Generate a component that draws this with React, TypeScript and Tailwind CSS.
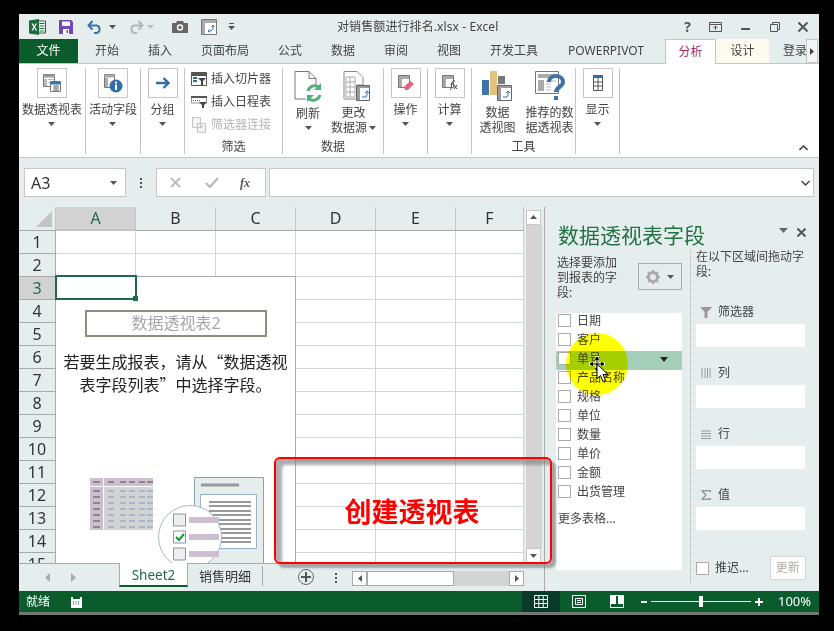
import type { ReactNode } from "react";

const cjk = "font-['Noto_Sans','Noto_Sans_CJK_SC',sans-serif]";

const tabs = [
  { label: "开始", w: "w-[58px]" },
  { label: "插入", w: "w-[48px]" },
  { label: "页面布局", w: "w-[82px]" },
  { label: "公式", w: "w-[48px]" },
  { label: "数据", w: "w-[58px]" },
  { label: "审阅", w: "w-[48px]" },
  { label: "视图", w: "w-[58px]" },
  { label: "开发工具", w: "w-[72px]" },
  { label: "POWERPIVOT", w: "w-[112px]" },
];

const fields = ["日期", "客户", "单号", "产品名称", "规格", "单位", "数量", "单价", "金额", "出货管理"];
const columns = ["A", "B", "C", "D", "E", "F"];
const rows = [1, 2, 3, 4, 5, 6, 7, 8, 9, 10, 11, 12, 13, 14, 15];

function Caret({ className = "" }: { className?: string }) {
  return (
    <svg width="7" height="4" viewBox="0 0 7 4" className={className}>
      <path d="M0 0h7L3.500 4z" fill="#555" />
    </svg>
  );
}

function IconBox({ children }: { children: ReactNode }) {
  return <div className="w-[30px] h-[30px] border border-[#c6c6c6] flex items-center justify-center">{children}</div>;
}

function BigButton({ label, children }: { label: string; children: ReactNode }) {
  return (
    <div className="flex flex-col items-center">
      <IconBox>{children}</IconBox>
      <div className="mt-[3px] leading-[18px] whitespace-nowrap">{label}</div>
      <Caret className="mt-[3px]" />
    </div>
  );
}

function Group({ w, label, children }: { w: string; label?: string; children: ReactNode }) {
  return (
    <div className={`${w} h-[86px] border-r border-[#c6c6c6] flex flex-col relative`}>
      <div className="flex-1 flex justify-center">{children}</div>
      <div className="h-[14px] leading-[14px] text-center">{label}</div>
    </div>
  );
}

function SheetIcon({ accent = "#3a74a8" }: { accent?: string }) {
  return (
    <svg width="20" height="18" viewBox="0 0 20 18">
      <path d="M1.500.500h11v12h-11z" fill="#fff" stroke="#777" />
      <path d="M1.500.500h11v3h-11z" fill="#999" />
      <path d="M2 5h3v7H2zM6 5h6v1H6zM6 8h6v1H6z" fill="#bbb" />
      <path d="M8.500 7.500h10v10h-10z" fill="#fff" stroke="#777" />
      <path d="M8.500 7.500h10v3h-10z" fill={accent} />
      <path d="M11 12h6M11 14h6M11 16h6M13 11v6M15 11v6" stroke="#888" />
    </svg>
  );
}

function CommonIcon({ type }: { type: "excel" | "save" | "undo" | "redo" | "camera" | "pivot" }) {
  if (type === "excel")
    return (
      <svg width="17" height="16" viewBox="0 0 17 16">
        <path d="M9 2h7.500v12H9z" fill="#fff" stroke="#1d6b3d" />
        <path d="M10.500 4.500h5M10.500 7h5M10.500 9.500h5M10.500 12h5" stroke="#1d6b3d" />
        <path d="M0 1.500 10 0v16L0 14.500z" fill="#1d6b3d" />
        <path d="m2.500 4.500 2 3.500-2 3.500h1.500l1.300-2.500 1.300 2.500h1.500L6 8l2-3.500H6.600L5.300 7 4 4.500z" fill="#fff" />
      </svg>
    );
  if (type === "save")
    return (
      <svg width="14" height="14" viewBox="0 0 14 14">
        <path d="M0 0h12l2 2v12H0z" fill="#7248b8" />
        <path d="M3 1.500h8v4.500H3z" fill="#fff" />
        <path d="M4 9h6v5H4z" fill="#fff" />
        <path d="M7.500 10h1.500v3H7.500z" fill="#7248b8" />
      </svg>
    );
  if (type === "undo" || type === "redo")
    return (
      <svg width="16" height="14" viewBox="0 0 16 14" className={type === "redo" ? "-scale-x-100" : ""}>
        <path
          d="M2 5.500h8a4 4 0 0 1 0 7.500H7M5.500 1 1.500 5.500l4 4"
          fill="none"
          stroke={type === "undo" ? "#3a74a8" : "#b5b5b5"}
          strokeWidth="2"
        />
      </svg>
    );
  if (type === "camera")
    return (
      <svg width="16" height="12" viewBox="0 0 16 12">
        <path d="M0 2h4l1-2h6l1 2h4v10H0z" fill="#666" />
        <circle cx="8" cy="6.500" r="3.200" fill="#fff" />
        <circle cx="8" cy="6.500" r="1.800" fill="#666" />
      </svg>
    );
  return (
    <svg width="16" height="16" viewBox="0 0 16 16">
      <path d="M.500.500h15v15H.500z" fill="#fff" stroke="#777" />
      <path d="M1 1h14v3H1zM1 4h3v11H1z" fill="#aaa" />
      <path d="M7 12h3l2-2V7M10.500 8 12 6l1.500 2M8.500 10.500 7 12l1.500 1.500" fill="none" stroke="#3a74a8" />
    </svg>
  );
}

function TitleBar() {
  return (
    <div className="h-[25px] flex items-center relative shrink-0">
      <div className="ml-[10px] w-[30px]"><CommonIcon type="excel" /></div>
      <div className="w-[28px]"><CommonIcon type="save" /></div>
      <CommonIcon type="undo" />
      <Caret className="ml-[6px] mr-[12px]" />
      <CommonIcon type="redo" />
      <Caret className="ml-[3px] mr-[18px] opacity-30" />
      <CommonIcon type="camera" />
      <div className="ml-[13px]"><CommonIcon type="pivot" /></div>
      <div className="ml-[11px] flex flex-col items-center gap-[2px]">
        <div className="w-[5px] h-px bg-[#555]" />
        <Caret />
      </div>
      <div className="absolute left-[318px] text-[12px] tracking-[0.1px] text-[#444]">对销售额进行排名.xlsx - Excel</div>
      <div className="absolute right-0 top-0 h-[25px] flex items-center text-[#555]">
        <span className="absolute right-[128px] font-bold text-[14px]">?</span>
        <svg width="13" height="10" viewBox="0 0 13 10" className="absolute right-[97px] top-[8px]">
          <path d="M.500.500h12v9H.500z M.500 2.500h12 M6.500 8V4M4.500 6l2-2 2 2" fill="none" stroke="#555" />
        </svg>
        <div className="absolute right-[69px] top-[14px] w-[9px] h-[2px] bg-[#555]" />
        <svg width="10" height="10" viewBox="0 0 10 10" className="absolute right-[39px] top-[8px]">
          <path d="M.500 2.500h7v7h-7zM2.500 2.500v-2h7v7h-2" fill="none" stroke="#555" />
        </svg>
        <svg width="10" height="10" viewBox="0 0 10 10" className="absolute right-[11px] top-[8px]">
          <path d="m.500.500 9 9M9.500.500l-9 9" stroke="#555" strokeWidth="2" />
        </svg>
      </div>
    </div>
  );
}

function TabBar() {
  return (
    <div className="h-[25px] flex text-[12px] text-[#444] leading-[23px] shrink-0 relative border-b border-[#c6c6c6]">
      <div className="w-[59px] h-[24px] bg-[#0b5c2d] text-white text-center">文件</div>
      {tabs.map((t) => (
        <div key={t.label} className={`${t.w} text-center`}>{t.label}</div>
      ))}
      <div className="w-[3px]" />
      <div className="w-[51px] h-[25px] bg-white border border-b-0 border-[#c6c6c6] text-[#a5276d] text-center z-10">分析</div>
      <div className="w-[53px] h-[24px] bg-[#fffaf0] text-center">设计</div>
      <div className="ml-[14px] w-[24px] overflow-hidden whitespace-nowrap">登录</div>
      <div className="absolute right-[1px] top-0 w-[12px] h-[24px] bg-[#f2f6f5] border border-[#c6c6c6] flex items-center justify-center">
        <svg width="4" height="7" viewBox="0 0 4 7"><path d="M0 0l4 3.500L0 7z" fill="#444" /></svg>
      </div>
    </div>
  );
}

function SmallRow({ label, muted, children }: { label: string; muted?: boolean; children: ReactNode }) {
  return (
    <div className={`h-[23px] flex items-center gap-[3px] whitespace-nowrap ${muted ? "text-[#b5b5b5]" : ""}`}>
      <div className="w-[18px] flex justify-center">{children}</div>
      {label}
    </div>
  );
}

function Ribbon() {
  return (
    <div className="h-[94px] bg-white border-b border-[#c6c6c6] flex pt-[4px] text-[12px] text-[#444] relative shrink-0">
      <Group w="w-[67px]">
        <BigButton label="数据透视表"><SheetIcon /></BigButton>
      </Group>
      <Group w="w-[55px]">
        <BigButton label="活动字段">
          <svg width="20" height="20" viewBox="0 0 20 20">
            <path d="M1.500 1.500h10v13h-10z" fill="#fff" stroke="#777" />
            <path d="M1.500 1.500h10v3h-10zM2 5h3v9H2z" fill="#aaa" />
            <circle cx="13" cy="13" r="6.500" fill="#2f6ea8" />
            <path d="M12 8.500h2v2h-2zM12 11.500h2V17h-2z" fill="#fff" />
          </svg>
        </BigButton>
      </Group>
      <Group w="w-[44px]">
        <BigButton label="分组">
          <svg width="14" height="12" viewBox="0 0 14 12">
            <path d="M0 6h12M7.500 1l5 5-5 5" fill="none" stroke="#2f6ea8" strokeWidth="2.400" />
          </svg>
        </BigButton>
      </Group>
      <Group w="w-[98px]" label="筛选">
        <div className="w-full pl-[5px] -mt-[1px]">
          <SmallRow label="插入切片器">
            <svg width="16" height="14" viewBox="0 0 16 14">
              <path d="M.500.500h15v13H.500z" fill="#fff" stroke="#555" />
              <path d="M1 1h14v3H1z" fill="#555" />
              <path d="M2 6h4M2 9h4" stroke="#2f6ea8" strokeWidth="2" />
              <path d="M7 6h8l-3 3v4h-2V9z" fill="#444" />
            </svg>
          </SmallRow>
          <SmallRow label="插入日程表">
            <svg width="16" height="12" viewBox="0 0 16 12">
              <path d="M0 0h16v2H0z" fill="#555" />
              <path d="M.500 2v5h15V2" fill="#fff" stroke="#999" />
              <path d="M2 4.500h7" stroke="#2f6ea8" strokeDasharray="1 1" />
              <path d="M8 6h8l-3 3v3h-2V9z" fill="#444" />
            </svg>
          </SmallRow>
          <SmallRow label="筛选器连接" muted>
            <svg width="14" height="16" viewBox="0 0 14 16">
              <path d="M.500.500h8v10h-8zM5.500 6.500h8v9h-8z" fill="#f4f4f4" stroke="#c4c4c4" />
              <path d="M7.500 9h4l-2 2.500z" fill="#c4c4c4" />
            </svg>
          </SmallRow>
        </div>
      </Group>
      <Group w="w-[101px]" label="数据">
        <div className="flex pt-[3px]">
          <div className="w-[47px] flex flex-col items-center">
            <svg width="28" height="32" viewBox="0 0 28 32">
              <path d="M1 .500h14l7 7V14M12 28H1V.500M15 .500v7h7" fill="#fff" stroke="#777" />
              <path d="M14 20a7 7 0 0 1 12-3M26 24a7 7 0 0 1-12 3" fill="none" stroke="#54ad76" strokeWidth="3" />
              <path d="M27 12v7h-7zM13 31v-7h7z" fill="#54ad76" />
            </svg>
            <div className="mt-[2px] leading-[18px]">刷新</div>
            <Caret className="mt-[3px]" />
          </div>
          <div className="w-[50px] -ml-[3px] mr-[3px] flex flex-col items-center">
            <svg width="28" height="32" viewBox="0 0 28 32" className="ml-[6px]">
              <path d="M1 .500h13l6 6V14H14v14H1z" fill="#fff" stroke="#888" />
              <path d="M3 6h9v20H3zM3 11h9M3 16h9M3 21h9M7 6v20" fill="none" stroke="#aaa" />
              <path d="M13.500 14.500h13v15h-13z" fill="#fff" stroke="#666" />
              <path d="M14 15h12v2H14zM14 17h3v12h-3z" fill="#999" />
              <path d="M19 26h4l1-2v-4M22 22l2-2 2 2" fill="none" stroke="#2f6ea8" />
            </svg>
            <div className="mt-[2px] leading-[15px]">更改</div>
            <div className="leading-[15px] whitespace-nowrap flex items-center gap-[2px]">数据源<Caret /></div>
          </div>
        </div>
      </Group>
      <Group w="w-[44px]">
        <BigButton label="操作">
          <svg width="18" height="18" viewBox="0 0 18 18">
            <path d="M1.500 1.500h11v12h-11z" fill="#fff" stroke="#777" />
            <path d="M2 2h10v3H2zM2 5h3v8H2z" fill="#aaa" />
            <path d="m7 13 6-6 4 3-6 6H8z" fill="#e2657c" />
          </svg>
        </BigButton>
      </Group>
      <Group w="w-[44px]">
        <BigButton label="计算">
          <svg width="18" height="18" viewBox="0 0 18 18">
            <path d="M1.500 1.500h11v12h-11z" fill="#fff" stroke="#777" />
            <path d="M2 2h10v3H2zM2 5h3v8H2z" fill="#aaa" />
            <path d="M9 16c2 0 1-8 3-9h2M9.500 10h3.500M13 11l3 4M16 11l-3 4" fill="none" stroke="#444" />
          </svg>
        </BigButton>
      </Group>
      <Group w="w-[104px]" label="工具">
        <div className="flex pt-[3px]">
          <div className="w-[52px] flex flex-col items-center">
            <svg width="32" height="32" viewBox="0 0 32 32">
              <path d="M0 9h7v15H0z" fill="#3f74a8" />
              <path d="M8 0h7v24H8z" fill="#e5c17e" />
              <path d="M16 5h7v8h-7z" fill="#777" />
              <path d="M15.500 14.500h14v15h-14z" fill="#fff" stroke="#666" />
              <path d="M16 15h13v2H16zM16 17h3v12h-3z" fill="#999" />
              <path d="M21 26h4l1-2v-4M24 22l2-2 2 2" fill="none" stroke="#2f6ea8" />
            </svg>
            <div className="mt-[2px] leading-[15px]">数据</div>
            <div className="leading-[15px] whitespace-nowrap">透视图</div>
          </div>
          <div className="w-[52px] flex flex-col items-center">
            <svg width="30" height="32" viewBox="0 0 30 32">
              <path d="M.500.500h23v22H.500z" fill="#fff" stroke="#777" />
              <path d="M3 3h18v4H3zM3 9h6v11H3z" fill="#aaa" />
              <path d="M11 10h10M11 13h5M11 16h5M11 19h5" stroke="#bbb" />
              <path d="M14 11c0-8 14-8 14 0 0 5-7 5-7 10" fill="none" stroke="#3f74a8" strokeWidth="4" />
              <path d="M19 25h4v4h-4z" fill="#3f74a8" />
            </svg>
            <div className="mt-[2px] leading-[15px] whitespace-nowrap">推荐的数</div>
            <div className="leading-[15px] whitespace-nowrap">据透视表</div>
          </div>
        </div>
      </Group>
      <Group w="w-[44px]">
        <BigButton label="显示">
          <svg width="10" height="16" viewBox="0 0 10 16">
            <path d="M.500.500h9v15h-9z" fill="#fff" stroke="#555" />
            <path d="M0 0h10v3H0z" fill="#2f6ea8" />
            <path d="M0 7h10M0 11h10M5 3v12" stroke="#555" />
          </svg>
        </BigButton>
      </Group>
      <svg width="9" height="6" viewBox="0 0 9 6" className="absolute right-[11px] bottom-[6px]">
        <path d="m.500 5 4-4 4 4" fill="none" stroke="#444" strokeWidth="1.600" />
      </svg>
    </div>
  );
}

function FormulaBar() {
  return (
    <div className="h-[49px] pl-[5px] pt-[10px] flex items-start shrink-0">
      <div className="w-[102px] h-[29px] bg-white border border-[#c6c6c6] pl-[6px] pr-[8px] flex items-center justify-between text-[16px] text-[#333]">
        A3
        <Caret />
      </div>
      <div className="w-[30px] h-[29px] flex flex-col items-center justify-center gap-[2px]">
        <div className="w-[2px] h-[2px] bg-[#555]" />
        <div className="w-[2px] h-[2px] bg-[#555]" />
        <div className="w-[2px] h-[2px] bg-[#555]" />
      </div>
      <div className="w-[110px] h-[29px] bg-white border border-[#c6c6c6] flex items-center">
        <svg width="11" height="11" viewBox="0 0 11 11" className="ml-[13px]"><path d="m1 1 9 9M10 1l-9 9" stroke="#bbb" strokeWidth="1.800" /></svg>
        <svg width="14" height="11" viewBox="0 0 14 11" className="ml-[24px]"><path d="m1 6 4 4 8-9" fill="none" stroke="#bbb" strokeWidth="2.400" /></svg>
        <span className="ml-[21px] font-['Liberation_Serif',serif] italic font-bold text-[12px] text-[#555]">fx</span>
      </div>
      <div className="ml-[3px] w-[545px] h-[29px] bg-white border border-[#c6c6c6] flex items-center justify-end pr-[3px]">
        <svg width="9" height="6" viewBox="0 0 9 6"><path d="m.500 1 4 4 4-4" fill="none" stroke="#444" strokeWidth="1.500" /></svg>
      </div>
    </div>
  );
}

function Illustration() {
  return (
    <svg width="176" height="87" viewBox="0 0 176 87" className="absolute left-[33px] bottom-0">
      <path d="M1 1h13v8H1zM15 1h49v8H15zM1 10h13v43H1z" fill="#cdbfd0" />
      <path d="M15 10h49v43H15z" fill="#d3d3d3" />
      {[5, 14, 20, 26, 32, 38, 44, 50].map((y) => (
        <g key={y}>
          <path d={`M4 ${y}h7`} stroke="#888" strokeWidth="2" />
          {[19, 31, 40, 50, 58].map((x) => (
            <path key={x} d={`M${x} ${y}h6`} stroke={y === 5 ? "#888" : "#a6b7c9"} strokeWidth="2" />
          ))}
        </g>
      ))}
      <path d="M105.500.500h69v87h-69z" fill="#e6eeed" stroke="#8ba0b5" />
      <path d="M112 8h38" stroke="#999" strokeWidth="3" />
      <path d="M111.500 17.500h56v54h-56z" fill="#fff" stroke="#9bb0c4" />
      {[25, 29, 34, 38, 43, 47, 52, 56, 61, 65].map((y) => (
        <path key={y} d={`M120 ${y}h42`} stroke="#999" strokeWidth="2" />
      ))}
      <circle cx="101" cy="60" r="31.500" fill="#fff" stroke="#a9b7c5" />
      {[37, 54, 71].map((y, i) => (
        <g key={y}>
          <path d={`M84.500 ${y}h12v12h-12z`} fill={i === 1 ? "#fff" : "#eee"} stroke="#8297a8" />
          <path d={`M100 ${y + 3}h30v6h-30z`} fill="#cdbfd0" />
        </g>
      ))}
      <path d="m87 60 3 3 5-6" fill="none" stroke="#1a9a2e" strokeWidth="2" />
    </svg>
  );
}

function Grid() {
  return (
    <div className="relative flex-1 overflow-hidden bg-white">
      <div className="flex h-[23px] bg-[#e6eeed] border-b border-[#a9a9a9] box-content">
        <div className="w-[37px] relative border-r border-[#c6c6c6]">
          <div className="absolute right-[3px] bottom-[3px] w-0 h-0 border-l-[16px] border-l-transparent border-b-[16px] border-b-[#c4c4c4]" />
        </div>
        {columns.map((c, i) => (
          <div
            key={c}
            className={`${i === 5 ? "w-[68px]" : "w-[80px]"} text-center text-[16px] leading-[23px] border-r border-[#c6c6c6] ${i === 0 ? "bg-[#d2d2d2] text-[#1d6b4a] border-b-2 border-[#1d6b4a] h-[24px]" : "text-[#333]"}`}
          >
            {c}
          </div>
        ))}
      </div>
      {rows.map((r) => (
        <div key={r} className="flex h-[23px]">
          <div className={`w-[37px] text-center text-[16px] leading-[22px] border-r border-b border-[#a9a9a9] ${r === 3 ? "bg-[#d2d2d2] text-[#1d6b4a]" : "bg-[#e6eeed] text-[#333]"}`}>{r}</div>
          {columns.map((c, i) => (
            <div key={c} className={`${i === 5 ? "w-[68px]" : "w-[80px]"} border-r border-b border-[#d4d4d4]`} />
          ))}
        </div>
      ))}
      {/* pivot placeholder */}
      <div className="absolute left-[37px] top-[69px] w-[240px] h-[288px] bg-white border-t border-r border-[#a9a9a9] flex flex-col items-center">
        <div className="mt-[33px] ml-[1px] w-[182px] h-[27px] border-2 border-[#8e8e7c] text-[16px] leading-[23px] text-center text-[#a6a6a6]">数据透视表2</div>
        <div className="mt-[13px] w-[240px] font-['Noto_Sans_CJK_SC',sans-serif] text-[16px] leading-[23px] text-center text-[#222] whitespace-nowrap">
          若要生成报表，请从“数据透视<br />表字段列表”中选择字段。
        </div>
        <Illustration />
      </div>
      {/* selected cell */}
      <div className="absolute left-[36px] top-[68px] w-[82px] h-[25px] border-2 border-[#1d6b4a]">
        <div className="absolute -right-[3px] -bottom-[3px] w-[5px] h-[5px] bg-[#1d6b4a] border-0" />
      </div>
    </div>
  );
}

function VerticalScroll() {
  return (
    <div className="w-[20px] pt-[3px] flex flex-col shrink-0 pl-[2px] pr-[2px] relative">
      <div className="w-[15px] h-[15px] bg-white border border-[#c6c6c6] flex items-center justify-center rotate-180"><Caret /></div>
      <div className="flex-1 bg-[#d4d4d4]" />
      <div className="w-[15px] h-[15px] bg-white border border-[#c6c6c6] flex items-center justify-center"><Caret /></div>
    </div>
  );
}

function SheetTabs() {
  return (
    <div className="h-[28px] flex border-t border-[#a9a9a9] text-[13px] text-[#333] relative shrink-0">
      <div className="w-[100px] flex items-center pl-[26px] gap-[21px]">
        <svg width="5" height="9" viewBox="0 0 5 9"><path d="M5 0v9L0 4.500z" fill="#aaa" /></svg>
        <svg width="5" height="9" viewBox="0 0 5 9"><path d="M0 0v9l5-4.500z" fill="#aaa" /></svg>
      </div>
      <div className="w-[69px] h-[24px] -mt-px bg-white border-x border-[#a9a9a9] border-b-2 border-b-[#0b5c2d] text-[#1d6b4a] text-center text-[13.500px] leading-[24px]">Sheet2</div>
      <div className="w-[75px] text-center leading-[24px] border-r border-[#a9a9a9] h-[20px] mt-[3px] -translate-y-[1px]">
        <span className="leading-[20px] block">销售明细</span>
      </div>
      <div className="w-[35px]" />
      <div className="w-[16px] h-[16px] mt-[5px] rounded-full border border-[#666] flex items-center justify-center">
        <svg width="10" height="10" viewBox="0 0 10 10"><path d="M5 0v10M0 5h10" stroke="#555" strokeWidth="2" /></svg>
      </div>
      <div className="w-[21px]" />
      <div className="w-[2px] mt-[9px] flex flex-col gap-[2px]">
        <div className="h-[2px] bg-[#555]" />
        <div className="h-[2px] bg-[#555]" />
        <div className="h-[2px] bg-[#555]" />
      </div>
      <div className="w-[15px]" />
      <div className="w-[172px] h-[15px] mt-[7px] flex bg-[#d4d4d4]">
        <div className="w-[15px] bg-white border border-[#a9a9a9] flex items-center justify-center">
          <svg width="4" height="7" viewBox="0 0 4 7"><path d="M4 0v7L0 3.500z" fill="#555" /></svg>
        </div>
        <div className="w-[87px] bg-white border border-[#a9a9a9]" />
        <div className="flex-1" />
        <div className="w-[15px] bg-white border border-[#a9a9a9] flex items-center justify-center">
          <svg width="4" height="7" viewBox="0 0 4 7"><path d="M0 0v7l4-3.500z" fill="#555" /></svg>
        </div>
      </div>
    </div>
  );
}

function PaneCheck() {
  return <div className="w-[13px] h-[13px] bg-white border border-[#ababab] shrink-0" />;
}

function AreaBox({ label, icon }: { label: string; icon: ReactNode }) {
  return (
    <div className="h-[61px]">
      <div className="h-[24px] flex items-center">
        <div className="w-[19px] flex justify-center">{icon}</div>
        <span className="ml-[3px]">{label}</span>
      </div>
      <div className="h-[23px] bg-white w-[109px]" />
    </div>
  );
}

function FieldPane() {
  return (
    <div className="w-[274px] h-full relative text-[12px] text-[#444] pl-[2px]">
      <div className="pl-[11px] pt-[14px] h-[38px] text-[21px] leading-[28px] text-[#217346] whitespace-nowrap">数据透视表字段</div>
      <svg width="9" height="5" viewBox="0 0 9 5" className="absolute left-[234px] top-[21px]"><path d="M0 0h9L4.500 5z" fill="#666" /></svg>
      <svg width="9" height="9" viewBox="0 0 9 9" className="absolute left-[252px] top-[21px]"><path d="m.500.500 8 8M8.500.500l-8 8" stroke="#555" strokeWidth="2" /></svg>
      <div className="flex">
        <div className="w-[135px] pl-[9px]">
          <div className="flex h-[68px] items-start">
            <div className="w-[82px] pl-px pt-[10px] pr-[20px] leading-[15px]">选择要添加到报表的字段:</div>
            <div className="w-[44px] h-[27px] mt-[18px] border border-[#ababab] flex items-center justify-center gap-[7px]">
              <svg width="14" height="14" viewBox="0 0 14 14">
                <circle cx="7" cy="7" r="4.500" fill="none" stroke="#aaa" strokeWidth="3" />
                <path d="M7 0v3M7 11v3M0 7h3M11 7h3M2 2l2 2M10 10l2 2M12 2l-2 2M4 10l-2 2" stroke="#aaa" strokeWidth="2" />
              </svg>
              <Caret />
            </div>
          </div>
          <div className="w-[126px] h-[257px] bg-white">
            {fields.map((f) => (
              <div key={f} className={`h-[19px] flex items-start pt-px pl-[2px] gap-[6px] leading-[13px] ${f === "单号" ? "bg-[#a5cfb9] relative" : ""}`}>
                <PaneCheck />
                {f}
                {f === "单号" && <svg width="8" height="5" viewBox="0 0 8 5" className="absolute right-[14px] top-[6px]"><path d="M0 0h8L4 5z" fill="#222" /></svg>}
              </div>
            ))}
            <div className="pl-[2px] pt-[7px]">更多表格...</div>
          </div>
        </div>
        <div className="ml-[8px] mt-[5px] w-px h-[333px] border-l border-dotted border-[#aaa]" />
        <div className="ml-[5px] w-[110px] -mt-[1px]">
          <div className="leading-[15px] h-[56px] pt-[5px]">在以下区域间拖动字段:</div>
          <AreaBox label="筛选器" icon={<svg width="12" height="11" viewBox="0 0 12 11"><path d="M0 0h12L7.500 5v6h-3V5z" fill="#999" /></svg>} />
          <AreaBox label="列" icon={<svg width="10" height="10" viewBox="0 0 10 10"><path d="M1 0v10M4 0v10M6.500 0v10M9 0v10" stroke="#999" /></svg>} />
          <AreaBox label="行" icon={<svg width="10" height="9" viewBox="0 0 10 9"><path d="M0 1h10M0 3.500h10M0 6h10M0 8.500h10" stroke="#999" /></svg>} />
          <AreaBox label="值" icon={<svg width="10" height="10" viewBox="0 0 10 10"><path d="M9.500 2V.800H1L5 5 1 9.200h8.500V8" fill="none" stroke="#888" strokeWidth="1.200" /></svg>} />
          <div className="mt-[12px] flex items-center h-[24px]">
            <PaneCheck />
            <span className="ml-[6px]">推迟...</span>
            <div className="ml-[21px] w-[36px] h-[24px] bg-white border border-[#d4d4d4] text-center leading-[22px] text-[#b5a9a9]">更新</div>
          </div>
        </div>
      </div>
    </div>
  );
}

function StatusBar() {
  return (
    <div className="h-[21px] bg-[#0b5c2d] text-white text-[12px] flex items-center relative shrink-0">
      <span className="ml-[7px] w-[44px]">就绪</span>
      <svg width="13" height="12" viewBox="0 0 13 12"><path d="M1 1h2v2h7V1h2v11H1z" fill="#fff" /><path d="M3 6h1M5.500 6h1M8 6h1M3 8h1M5.500 8h1M8 8h1" stroke="#0b5c2d" /></svg>
      <div className="absolute left-[503px] top-0 w-[38px] h-[21px] bg-[#0a3a2a] flex items-center justify-center">
        <svg width="14" height="13" viewBox="0 0 14 13"><path d="M.500.500h13v12H.500zM.500 4.500h13M.500 8.500h13M4.800.500v12M9.200.500v12" fill="none" stroke="#fff" /></svg>
      </div>
      <svg width="14" height="13" viewBox="0 0 14 13" className="absolute left-[553px] top-[4px]"><path d="M.500.500h13v12H.500zM3.500 3.500h7v6h-7zM5 5.500h4M5 7.500h4" fill="none" stroke="#fff" /></svg>
      <svg width="14" height="13" viewBox="0 0 14 13" className="absolute left-[591px] top-[4px]"><path d="M.500.500h13v12H.500z" fill="none" stroke="#fff" /><path d="M1 1h5v8H1zM8 1h5v8H8z" fill="#fff" /></svg>
      <div className="absolute left-[622px] top-[10px] w-[6px] h-[2px] bg-white" />
      <div className="absolute left-[632px] top-[10px] w-[100px] h-px bg-white" />
      <div className="absolute left-[680px] top-[5px] w-[4px] h-[11px] bg-white" />
      <svg width="8" height="8" viewBox="0 0 8 8" className="absolute left-[736px] top-[7px]"><path d="M4 0v8M0 4h8" stroke="#fff" strokeWidth="2" /></svg>
      <span className="absolute left-[759px] text-[13px]">100%</span>
    </div>
  );
}

export default function App() {
  return (
    <div className={`w-[834px] h-[631px] bg-black pt-[14px] pl-[19px] overflow-hidden relative ${cjk}`}>
      <div className="w-[800px] h-[601px] bg-[#e6eeed] border-b-[3px] border-[#777] flex flex-col">
        <TitleBar />
        <TabBar />
        <Ribbon />
        <FormulaBar />
        <div className="flex-1 flex min-h-0">
          <div className="w-[526px] flex flex-col border-r border-[#a9a9a9]">
            <div className="flex-1 flex min-h-0">
              <div className="w-[505px] flex flex-col"><Grid /></div>
              <VerticalScroll />
            </div>
            <SheetTabs />
          </div>
          <FieldPane />
        </div>
        <StatusBar />
      </div>
      {/* red callout */}
      <div className="absolute left-[274px] top-[457px] w-[278px] h-[107px] rounded-[6px] border-2 border-[#fe0000] shadow-[inset_6px_6px_3px_rgba(120,120,120,0.6),4px_4px_2px_rgba(120,120,120,0.6)] flex items-center justify-center">
        <span className="text-[27px] font-bold text-[#fe0000] leading-none -ml-[2px] mt-[2px]">创建透视表</span>
      </div>
      {/* cursor highlight */}
      <div className="absolute left-[566px] top-[333px] w-[62px] h-[62px] rounded-full bg-[#ffff00] mix-blend-multiply" />
      <svg width="22" height="28" viewBox="0 0 22 28" className="absolute left-[588px] top-[356px]">
        <path d="M9 0v16M1 8h16" stroke="#fff" strokeWidth="3" />
        <path d="M9 1v14M2 8h14M9 1 7.500 3.500h3zM9 15l-1.500-2.500h3zM2 8l2.500-1.500v3zM16 8l-2.500-1.500v3z" fill="#000" stroke="#000" />
        <path d="M9 8v15l3.500-3.500 2.500 6 2.500-1-2.500-6H20z" fill="#fff" stroke="#000" />
      </svg>
    </div>
  );
}
